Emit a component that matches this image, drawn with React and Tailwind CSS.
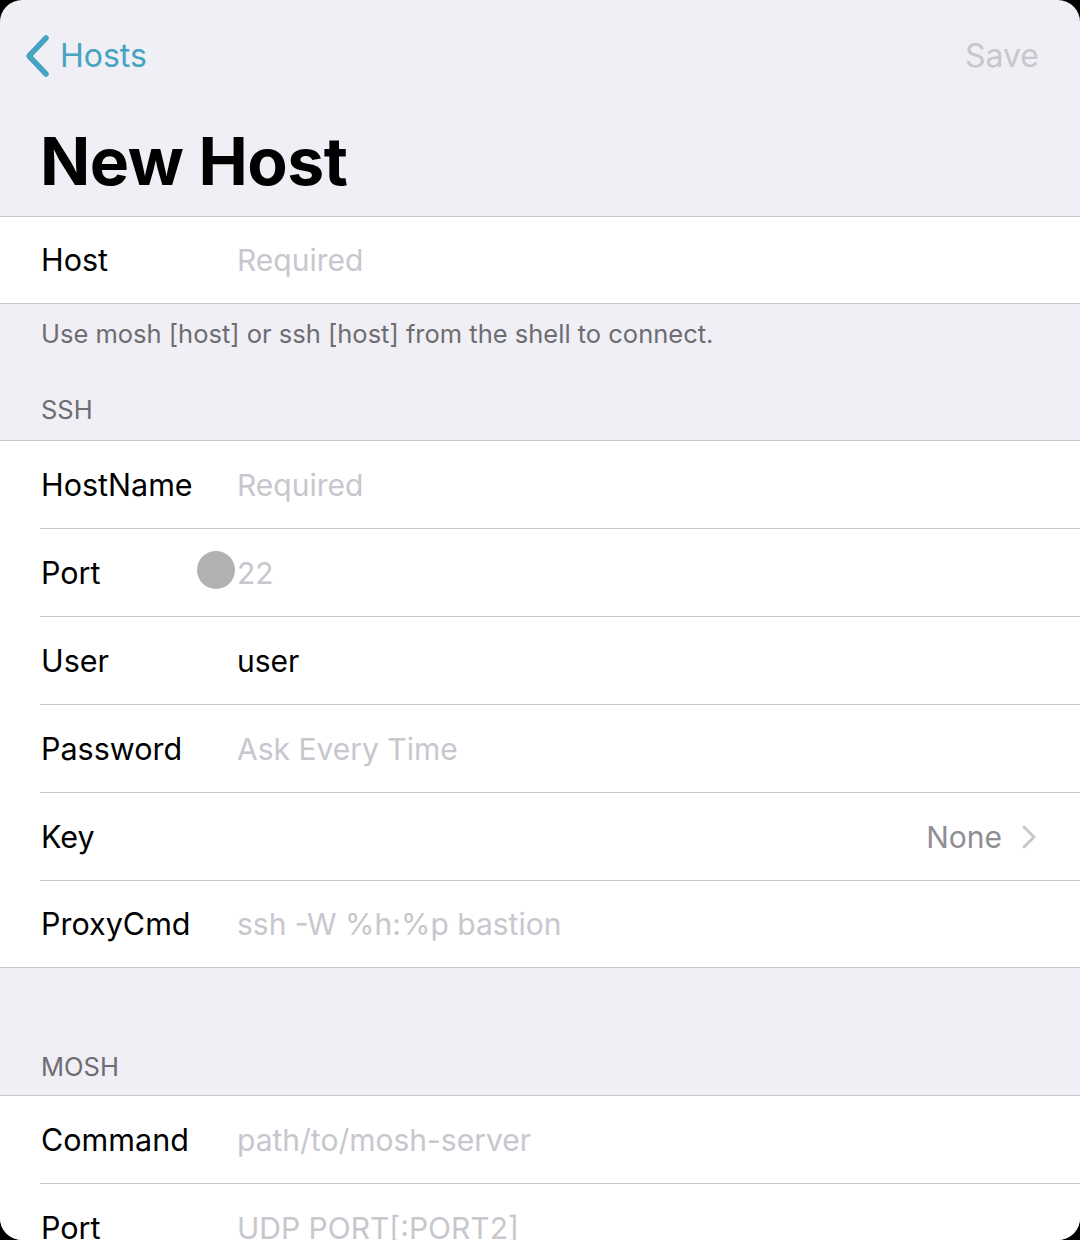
const FONT = 'font-["Inter","Liberation_Sans",sans-serif]'

function Row({ label, value, placeholder = true, last = false, children }) {
  return (
    <div className={`relative flex items-center pl-[41px] ${last ? 'h-[86px]' : 'h-[88px]'}`}>
      <div className="w-[196px] shrink-0 text-[30.5px] text-black">{label}</div>
      {children || (
        <div className={`text-[30px] ${placeholder ? 'text-[#c7c7cd]' : 'text-black'}`}>{value}</div>
      )}
      {!last && <div className="absolute bottom-0 left-[40px] right-0 h-px bg-[#c8c7cc]" />}
    </div>
  )
}

function SectionHeader({ children, className = '' }) {
  return (
    <div className={`pl-[41px] text-[25.5px] uppercase text-[#6d6d72] ${className}`}>{children}</div>
  )
}

export default function App() {
  return (
    <div className={`h-[1240px] w-[1080px] bg-black ${FONT}`}>
      <div className="h-full w-full overflow-hidden rounded-[22px] bg-[#f0eff5]">
        <div className="flex h-[112px] items-center justify-between pl-[24px] pr-[41px]">
          <button type="button" className="flex items-center gap-[8px] text-[#45a4bf]">
            <svg width="28" height="44" viewBox="0 0 28 44" fill="none">
              <path d="M22 4 L5 22 L22 40" stroke="currentColor" strokeWidth="5.5" strokeLinecap="round" strokeLinejoin="round" />
            </svg>
            <span className="text-[32px] leading-none">Hosts</span>
          </button>
          <span className="text-[32px] leading-none text-[#c7c7cc]">Save</span>
        </div>

        <div className="flex h-[104px] items-end pb-[22px] pl-[40px]">
          <h1 className="text-[66px] font-bold leading-none tracking-[-0.5px] text-black">New Host</h1>
        </div>

        <div className="border-y border-[#c8c7cc] bg-white">
          <Row label="Host" value="Required" last />
        </div>

        <div className="h-[136px] pt-[12px]">
          <p className="pl-[41px] text-[25.5px] leading-[36px] text-[#6d6d72]">
            Use mosh [host] or ssh [host] from the shell to connect.
          </p>
          <SectionHeader className="mt-[40px] leading-[36px]">SSH</SectionHeader>
        </div>

        <div className="border-y border-[#c8c7cc] bg-white">
          <Row label="HostName" value="Required" />
          <Row label="Port">
            <div className="absolute left-[197px] top-[22px] h-[38px] w-[38px] rounded-full bg-[#b1b1b1]" />
            <div className="text-[30px] text-[#c7c7cd]">22</div>
          </Row>
          <Row label="User" value="user" placeholder={false} />
          <Row label="Password" value="Ask Every Time" />
          <Row label="Key">
            <div className="ml-auto flex items-center gap-[20px] pr-[44px]">
              <span className="text-[30px] text-[#8e8e93]">None</span>
              <svg width="14" height="24" viewBox="0 0 14 24" fill="none">
                <path d="M2 2 L12 12 L2 22" stroke="#c7c7cc" strokeWidth="3" strokeLinecap="round" strokeLinejoin="round" />
              </svg>
            </div>
          </Row>
          <Row label="ProxyCmd" value="ssh -W %h:%p bastion" last />
        </div>

        <div className="flex h-[127px] items-end pb-[10px]">
          <SectionHeader className="leading-[36px]">MOSH</SectionHeader>
        </div>

        <div className="border-t border-[#c8c7cc] bg-white">
          <Row label="Command" value="path/to/mosh-server" />
          <Row label="Port" value="UDP PORT[:PORT2]" />
        </div>
      </div>
    </div>
  )
}
